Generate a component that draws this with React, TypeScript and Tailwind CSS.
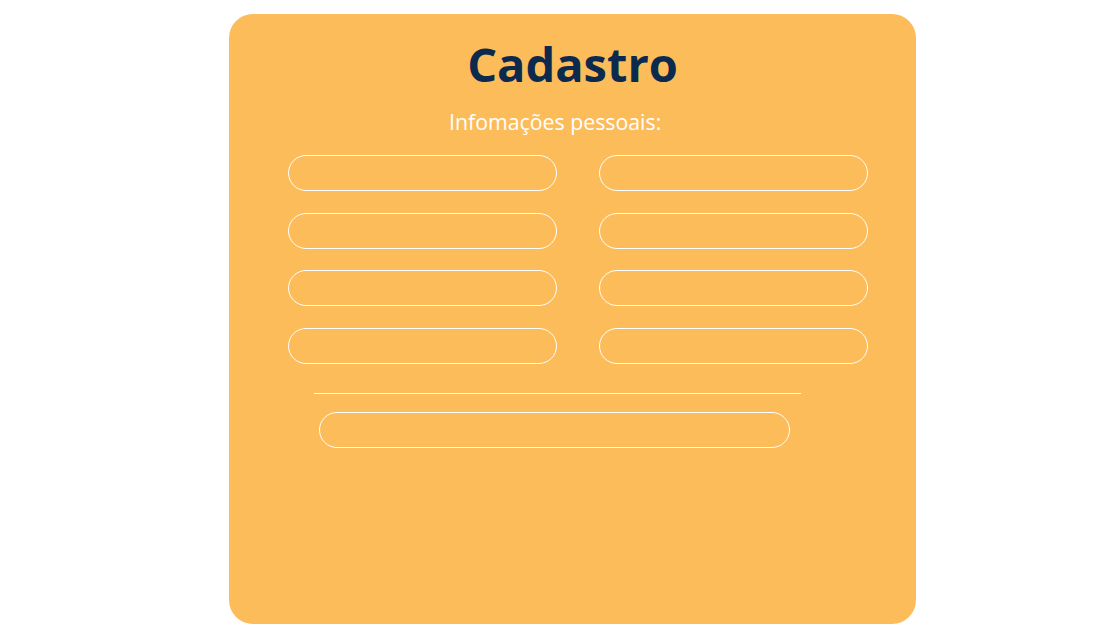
const Field = () => (
  <input
    type="text"
    className="h-[36px] w-[269px] rounded-full border border-white bg-transparent px-4 text-white outline-none"
  />
);

export default function App() {
  return (
    <div className="min-h-screen bg-white font-['Open_Sans',sans-serif]">
      <div className="ml-[229px] pt-[14px]">
        <div className="flex h-[610px] w-[687px] flex-col rounded-[24px] bg-[#fdbc5a]">
          <h1 className="mt-[27px] text-center text-[47px] leading-[47px] font-bold text-[#0c2a4e]">
            Cadastro
          </h1>
          <p className="mt-[20px] pl-[220px] text-[21.3px] leading-[28px] text-white">
            Infomações pessoais:
          </p>
          <div className="mt-[19px] grid w-max grid-cols-[269px_269px] gap-x-[42px] gap-y-[21.5px] pl-[59px]">
            <Field />
            <Field />
            <Field />
            <Field />
            <Field />
            <Field />
            <Field />
            <Field />
          </div>
          <div className="mt-[29px] ml-[85px] h-px w-[487px] bg-white" />
          <div className="mt-[18px] ml-[90px]">
            <input
              type="text"
              className="h-[36px] w-[471px] rounded-full border border-white bg-transparent px-4 text-white outline-none"
            />
          </div>
        </div>
      </div>
    </div>
  );
}
